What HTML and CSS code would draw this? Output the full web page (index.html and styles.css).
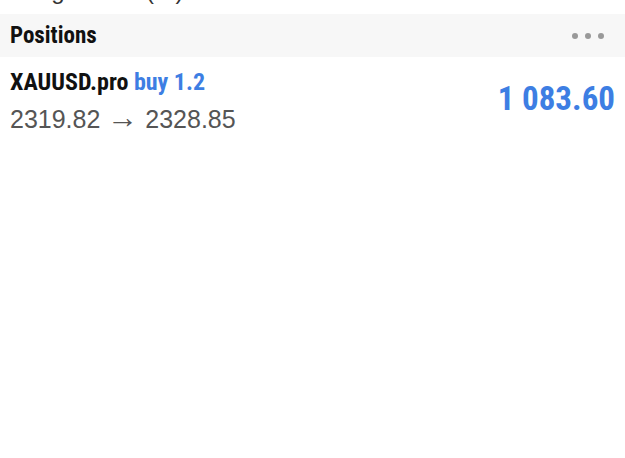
FILE: index.html
```html
<!DOCTYPE html>
<html lang="en">
<head>
    <meta charset="UTF-8">
    <meta name="viewport" content="width=device-width, initial-scale=1.0">
    <title>Trade</title>
    <link rel="stylesheet" href="styles.css">
</head>
<body>
    <div class="summary-row">
        <span class="summary-label">Margin level (%)</span>
        <span class="summary-value">3 562.09</span>
    </div>

    <div class="section-header">
        <h2>Positions</h2>
        <div class="more">
            <span class="dot"></span>
            <span class="dot"></span>
            <span class="dot"></span>
        </div>
    </div>

    <div class="position">
        <div class="position-info">
            <div class="position-title">XAUUSD.pro <span class="side">buy 1.2</span></div>
            <div class="position-prices">2319.82 <span class="arrow">&rarr;</span> 2328.85</div>
        </div>
        <div class="position-profit">1 083.60</div>
    </div>
</body>
</html>
```

FILE: styles.css
```css
body {
    margin: 0;
    background: #fff;
    font-family: "Liberation Sans", Arial, sans-serif;
    color: #222;
}
.summary-row {
    display: flex;
    justify-content: space-between;
    align-items: flex-end;
    height: 14px;
    padding: 0 10px;
    overflow: hidden;
}
.summary-row span {
    font-size: 24px;
    line-height: 24px;
    margin-bottom: 11px;
}
.summary-label {
    color: #333;
}
.summary-value {
    color: #aaa;
}
.section-header {
    display: flex;
    align-items: center;
    justify-content: space-between;
    height: 43px;
    padding: 0 21px 0 10px;
    background: #f7f7f7;
}
.section-header h2 {
    margin: 0;
    font-family: Roboto, sans-serif;
    font-stretch: condensed;
    font-weight: bold;
    font-size: 23px;
    color: #111;
}
.more {
    display: flex;
    gap: 7px;
}
.dot {
    width: 6px;
    height: 6px;
    border-radius: 50%;
    background: #999;
}
.position {
    display: flex;
    align-items: center;
    justify-content: space-between;
    padding: 11px 10px 0;
}
.position-title {
    font-family: Roboto, sans-serif;
    font-stretch: condensed;
    font-weight: bold;
    font-size: 24px;
    line-height: 28px;
    color: #111;
}
.side {
    color: #3d7ee3;
}
.position-prices {
    margin-top: 5px;
    font-size: 25px;
    line-height: 36px;
    color: #555;
}
.arrow {
    font-size: 31px;
    line-height: 0;
}
.position-profit {
    font-family: Roboto, sans-serif;
    font-stretch: condensed;
    font-weight: bold;
    font-size: 33px;
    color: #3d7ee3;
    padding-bottom: 9px;
}
```
